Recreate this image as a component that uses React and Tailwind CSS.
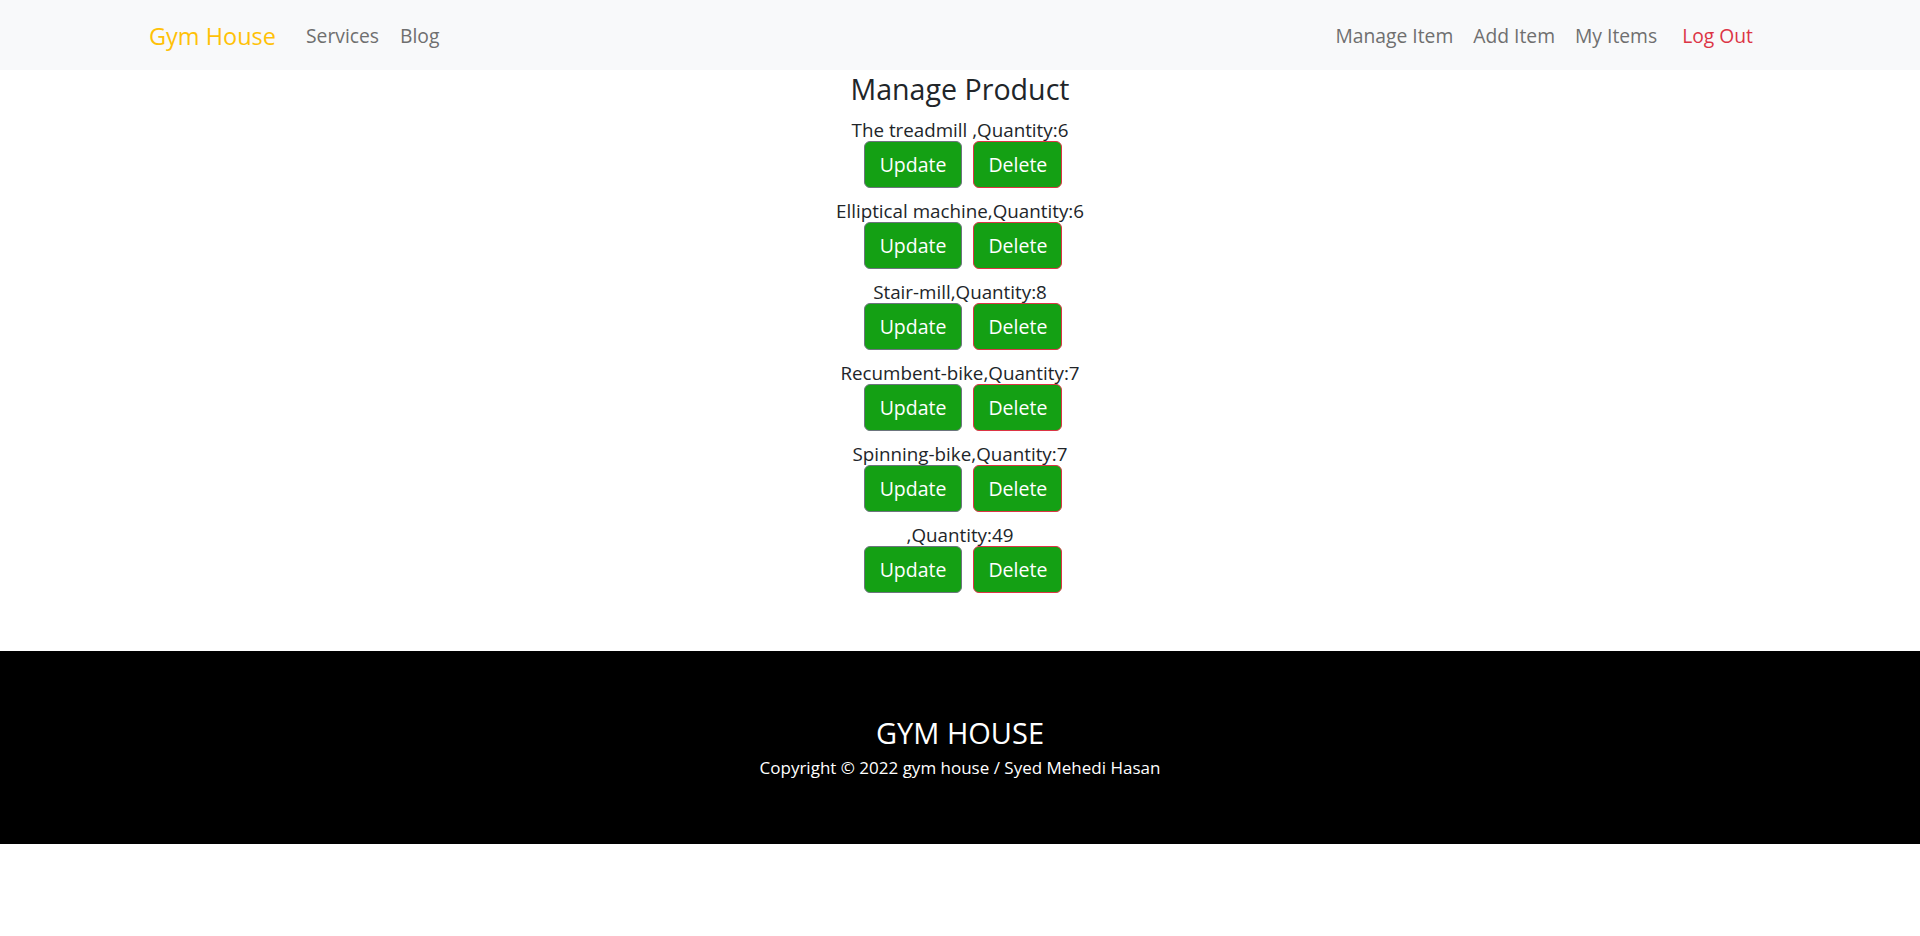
import React from "react";

// Lista de produtos
const produtos = [
  { nome: "The treadmill ", quantidade: 6 },
  { nome: "Elliptical machine", quantidade: 6 },
  { nome: "Stair-mill", quantidade: 8 },
  { nome: "Recumbent-bike", quantidade: 7 },
  { nome: "Spinning-bike", quantidade: 7 },
  { nome: "", quantidade: 49 },
];

export default function App() {
  return (
    <div className="min-h-screen bg-white text-[#212529] font-['Open_Sans',sans-serif]">
      {/* --- Navbar --- */}
      <nav className="bg-[#f8f9fa] h-[70px] pt-[3px] flex items-center justify-between pl-[149px] pr-[167px]">
        <div className="flex items-center">
          <span className="text-[23.5px] text-[#ffc107]">Gym House</span>
          <span className="ml-[30px] text-[19.3px] text-[#6f6f6f]">Services</span>
          <span className="ml-[21px] text-[19.3px] text-[#6f6f6f]">Blog</span>
        </div>
        <div className="flex items-center text-[19.3px]">
          <span className="text-[#6f6f6f]">Manage Item</span>
          <span className="ml-[20px] text-[#6f6f6f]">Add Item</span>
          <span className="ml-[20px] text-[#6f6f6f]">My Items</span>
          <span className="ml-[25px] text-[#dc3545]">Log Out</span>
        </div>
      </nav>

      {/* --- Produtos --- */}
      <main className="flex flex-col items-center pb-[46px]">
        <h3 className="text-[28.6px] leading-[36px] mt-[1px] mb-[12px]">Manage Product</h3>
        {produtos.map((p, idx) => (
          <div key={idx} className="flex flex-col items-center mb-[12px]">
            <p className="text-[18.8px] leading-[22px]">
              {p.nome},Quantity:{p.quantidade}
            </p>
            <div className="flex gap-[11px] pl-[6px]">
              <button className="bg-[#14a014] text-white text-[19.5px] h-[47px] px-[15px] rounded-md border border-[#6c757d]">
                Update
              </button>
              <button className="bg-[#14a014] text-white text-[19.5px] h-[47px] px-[14px] rounded-md border border-[#dc3545]">
                Delete
              </button>
            </div>
          </div>
        ))}
      </main>

      {/* --- Footer --- */}
      <footer className="bg-black text-white h-[193px] flex flex-col items-center pt-[64px]">
        <h4 className="text-[29px] leading-[36px]">GYM HOUSE</h4>
        <p className="mt-[4px] text-[17px] leading-[26px]">Copyright © 2022 gym house / Syed Mehedi Hasan</p>
      </footer>
    </div>
  );
}
